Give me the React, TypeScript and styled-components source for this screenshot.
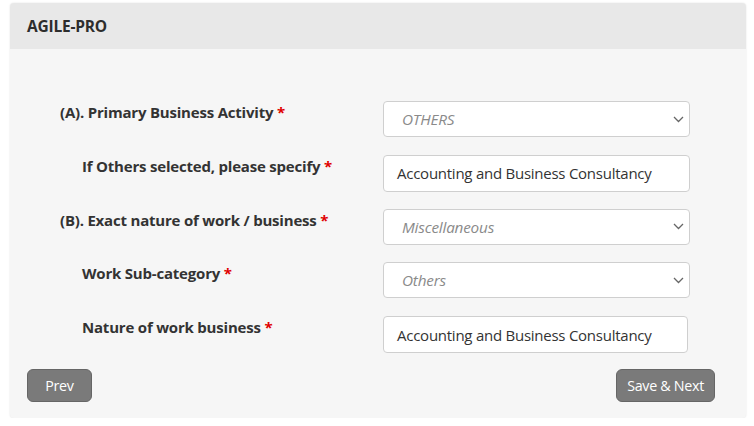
import React from 'react';
import styled, { createGlobalStyle } from 'styled-components';

const GlobalStyle = createGlobalStyle`
  body {
    margin: 0;
    background: #ffffff;
    font-family: 'Open Sans', 'Noto Sans', sans-serif;
    color: #333;
  }
`;

interface Field {
  label: string;
  indent?: boolean;
  kind: 'select' | 'input';
  value: string;
  narrow?: boolean;
}

const fields: Field[] = [
  { label: '(A). Primary Business Activity', kind: 'select', value: 'OTHERS' },
  { label: 'If Others selected, please specify', indent: true, kind: 'input', value: 'Accounting and Business Consultancy' },
  { label: '(B). Exact nature of work / business', kind: 'select', value: 'Miscellaneous' },
  { label: 'Work Sub-category', indent: true, kind: 'select', value: 'Others' },
  { label: 'Nature of work business', indent: true, kind: 'input', value: 'Accounting and Business Consultancy', narrow: true },
];

const Chevron = () => (
  <svg width="11" height="7" viewBox="0 0 11 7" fill="none">
    <path d="M1 1l4.5 4.5L10 1" stroke="#666" strokeWidth="1.3" />
  </svg>
);

const App: React.FC = () => {
  return (
    <>
      <GlobalStyle />
      <Card>
        <Header>AGILE-PRO</Header>
        <Body>
          <Form>
            {fields.map((f) => (
              <Row key={f.label}>
                <Label indent={f.indent}>
                  {f.label} <Req>*</Req>
                </Label>
                {f.kind === 'select' ? (
                  <SelectBox>
                    <span>{f.value}</span>
                    <Chevron />
                  </SelectBox>
                ) : (
                  <TextInput narrow={f.narrow}>{f.value}</TextInput>
                )}
              </Row>
            ))}
          </Form>
          <Actions>
            <Button>Prev</Button>
            <Button>Save &amp; Next</Button>
          </Actions>
        </Body>
      </Card>
    </>
  );
};

const Card = styled.div`
  margin: 3px 8px 0 10px;
  height: 415px;
  box-sizing: border-box;
  background: #f6f6f6;
  border-radius: 4px;
  box-shadow: 0 0 2px rgba(0, 0, 0, 0.12);
  overflow: hidden;
  display: flex;
  flex-direction: column;
`;

const Header = styled.div`
  height: 46px;
  flex-shrink: 0;
  display: flex;
  align-items: center;
  padding: 0 17px;
  background: #e8e8e8;
  font-weight: 700;
  font-size: 15.5px;
  color: #2d2d2d;
  letter-spacing: -0.2px;
`;

const Body = styled.div`
  flex: 1;
  display: flex;
  flex-direction: column;
  padding: 52px 31px 16px 17px;
`;

const Form = styled.div`
  display: flex;
  flex-direction: column;
  gap: 17.75px;
  padding-left: 33px;
`;

const Row = styled.div`
  display: grid;
  grid-template-columns: 323px 307px;
  align-items: start;
  height: 36px;
`;

const Label = styled.div<{ indent?: boolean }>`
  padding-left: ${(p) => (p.indent ? '22px' : '0')};
  font-weight: 700;
  font-size: 15px;
  line-height: 22px;
  color: #333;
  letter-spacing: -0.2px;
  white-space: nowrap;
`;

const Req = styled.span`
  color: #e00000;
`;

const SelectBox = styled.div`
  height: 36px;
  box-sizing: border-box;
  display: flex;
  align-items: center;
  justify-content: space-between;
  padding: 0 5px 0 18px;
  background: #fff;
  border: 1px solid #cfcfcf;
  border-radius: 4px;
  font-style: italic;
  font-size: 15.3px;
  color: #8a8a8a;
  letter-spacing: -0.2px;
`;

const TextInput = styled.div<{ narrow?: boolean }>`
  height: 37px;
  width: ${(p) => (p.narrow ? '305px' : '307px')};
  box-sizing: border-box;
  display: flex;
  align-items: center;
  padding: 0 13px;
  background: #fff;
  border: 1px solid #cfcfcf;
  border-radius: 4px;
  font-size: 15px;
  color: #333;
  letter-spacing: -0.25px;
  white-space: nowrap;
`;

const Actions = styled.div`
  margin-top: auto;
  display: flex;
  justify-content: space-between;
  align-items: center;
`;

const Button = styled.button`
  height: 33px;
  padding: 0 10px;
  min-width: 65px;
  background: #7a7a7a;
  color: #fff;
  border: 1px solid #666;
  border-radius: 6px;
  font-family: inherit;
  font-size: 14.3px;
  letter-spacing: -0.3px;
`;

export default App;
